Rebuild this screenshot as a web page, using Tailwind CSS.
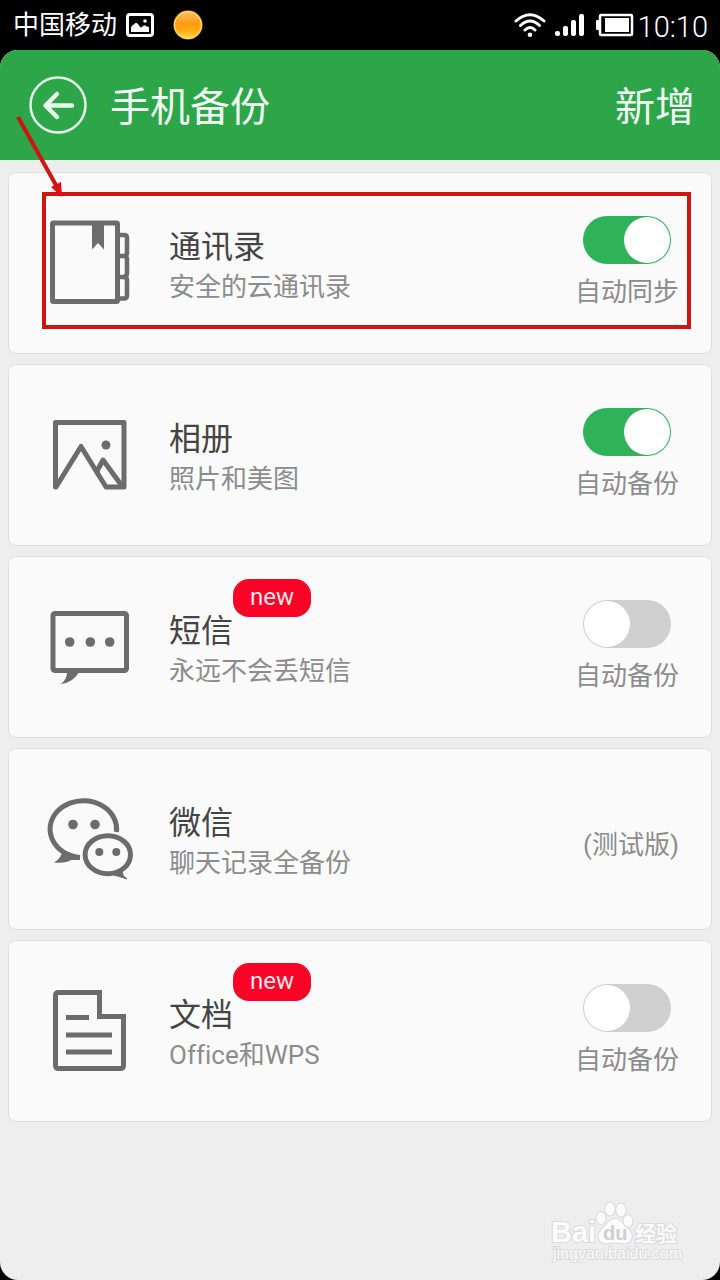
<!DOCTYPE html>
<html lang="zh-CN">

<head>
    <meta charset="UTF-8">
    <meta name="viewport" content="width=device-width, initial-scale=1.0">
    <script src="https://cdn.jsdelivr.net/npm/@tailwindcss/browser@4"></script>
    <title>手机备份</title>
</head>

<body class="bg-black font-['Roboto','Noto_Sans_CJK_SC',sans-serif] [font-variant-ligatures:none]">
    <div class="min-h-screen flex flex-col">

        <!-- status bar -->
        <div class="h-[50px] flex items-center justify-between pl-[13px] pr-3 text-white">
            <div class="flex items-center">
                <span class="text-[26px] leading-[50px]">中国移动</span>
                <svg class="w-7 h-6 ml-[9px]" viewBox="0 0 28 24" fill="none">
                    <rect x="1.5" y="1.5" width="25" height="21" rx="2.5" stroke="#fff" stroke-width="3" />
                    <path d="M5 19V14.500C6 12.500 7 11.500 8 11.500C9 9 12 9.500 13 12.500C14 14 15 15 16 14C17.500 12 20 12 21 14C22 13 23 14 23 15V19Z" fill="#fff" />
                    <circle cx="19" cy="8" r="1.800" fill="#fff" />
                </svg>
                <svg class="size-8 ml-[18px]" viewBox="0 0 32 32">
                    <defs>
                        <linearGradient id="sun" x1="0" y1="0" x2="0" y2="1">
                            <stop offset="0" stop-color="#ffc070" />
                            <stop offset=".45" stop-color="#ff9c10" />
                            <stop offset=".7" stop-color="#ffa814" />
                            <stop offset="1" stop-color="#ffdc50" />
                        </linearGradient>
                    </defs>
                    <circle cx="16" cy="16" r="15" fill="#8a7410" opacity=".5" />
                    <circle cx="16" cy="16" r="13.500" fill="url(#sun)" stroke="#ffd85a" stroke-width="1.500" />
                </svg>
            </div>
            <div class="flex items-center">
                <svg class="w-8 h-6" viewBox="0 0 32 24" fill="none" stroke="#fff" stroke-width="3" stroke-linecap="round">
                    <path d="M2 8Q16 -4.500 30 8M6.500 12.500Q16 3.500 25.500 12.500M11 17Q16 12 21 17" />
                    <circle cx="16" cy="21.700" r="2.300" fill="#fff" stroke="none" />
                </svg>
                <svg class="w-[30px] h-6 ml-2" viewBox="0 0 30 24" fill="#fff">
                    <rect x="1" y="18" width="5" height="5" rx="2" />
                    <rect x="9" y="13" width="5" height="10" rx="2" />
                    <rect x="17" y="7" width="5" height="16" rx="2" />
                    <rect x="25" y="1" width="5" height="22" rx="2" />
                </svg>
                <svg class="w-[38px] h-6 ml-3" viewBox="0 0 38 24" fill="none">
                    <rect x="4" y="2" width="32" height="20" rx="1" stroke="#fff" stroke-width="2.500" />
                    <rect x="0" y="7" width="4" height="10" rx="1" fill="#fff" />
                    <rect x="9" y="5" width="24" height="14" fill="#fff" />
                </svg>
                <time class="text-[29px] leading-[50px] font-light ml-1 pt-1">10:10</time>
            </div>
        </div>

        <div class="grow flex flex-col bg-[#eeeeee] rounded-[18px]">
            <header class="h-[111px] flex items-center bg-[#2ca649] border-b border-[#d5fadb] rounded-t-[18px] text-[#f2fff4] pl-7 pr-[25px]">
                <button type="button" aria-label="返回" class="size-[60px]">
                    <svg viewBox="0 0 60 60" fill="none" stroke="#e6fbe9">
                        <circle cx="30" cy="30" r="27.500" stroke-width="2.500" />
                        <path d="M44 30.500H18M29 19L17.500 30.500L29 42" stroke-width="4.500" stroke-linecap="round" stroke-linejoin="round" />
                    </svg>
                </button>
                <h1 class="text-[40px] leading-[60px] ml-[22px] pt-1.5">手机备份</h1>
                <button type="button" class="text-[40px] leading-[60px] ml-auto pt-1.5">新增</button>
            </header>

            <main class="px-2 pt-[11px]">
                <ul class="flex flex-col gap-[10px]">
                    <li class="relative flex items-center h-[182px] bg-[#fafafa] border border-[#dedede] rounded-lg pl-[33px] pr-8">
                        <svg class="size-24 shrink-0" viewBox="0 0 96 96" fill="none" stroke="#6c6c6c">
                            <rect x="10.500" y="8" width="65" height="78.500" rx="1" stroke-width="5" />
                            <path d="M50 8H62V34.500L56 28L50 34.500Z" fill="#6c6c6c" stroke="none" />
                            <path d="M77 20H82Q85 20 85 23V38Q85 41 81 41H77M81 41Q85 41 85 44V58Q85 62 81 62H77M81 62Q85 62 85 65V80Q85 83.500 82 83.500H77" stroke-width="4.500" />
                        </svg>
                        <div class="ml-[31px] pt-2">
                            <h2 class="w-fit text-[32px] leading-10 text-[#444444]">通讯录</h2>
                            <p class="text-[26px] leading-10 text-[#8c8c8c]">安全的云通讯录</p>
                        </div>
                        <label class="ml-auto flex flex-col items-center gap-[10px] text-[26px] leading-9 text-[#8c8c8c]">
                            <input type="checkbox" checked class="appearance-none w-[88px] h-12 rounded-full bg-[#cfcfcf] checked:bg-[#30b25b] p-px before:block before:size-[46px] before:rounded-full before:bg-white checked:before:ml-10">
                            自动同步
                        </label>
                        <!-- marker around the first entry -->
                        <div class="absolute left-[33px] right-5 top-[19px] bottom-6 border-4 border-[#d01414] pointer-events-none"></div>
                        <svg class="absolute left-0 -top-16 w-16 h-[90px] pointer-events-none" viewBox="0 0 64 90" fill="none">
                            <path d="M9 8L48 78" stroke="#d01414" stroke-width="4" />
                            <path d="M53 88L42 78L52 73Z" fill="#e80c0c" />
                        </svg>
                    </li>

                    <li class="flex items-center h-[182px] bg-[#fafafa] border border-[#dedede] rounded-lg pl-[33px] pr-8">
                        <svg class="size-24 shrink-0" viewBox="0 0 96 96" fill="none" stroke="#6c6c6c" stroke-width="5" stroke-linejoin="round">
                            <path d="M13.500 80V15.500H82V80H64L39 39.500L14 80Z" />
                            <path d="M55 64L61 53L80 79" />
                            <circle cx="64" cy="38" r="4.500" fill="#6c6c6c" stroke="none" />
                        </svg>
                        <div class="ml-[31px] pt-2">
                            <h2 class="w-fit text-[32px] leading-10 text-[#444444]">相册</h2>
                            <p class="text-[26px] leading-10 text-[#8c8c8c]">照片和美图</p>
                        </div>
                        <label class="ml-auto flex flex-col items-center gap-[10px] text-[26px] leading-9 text-[#8c8c8c]">
                            <input type="checkbox" checked class="appearance-none w-[88px] h-12 rounded-full bg-[#cfcfcf] checked:bg-[#30b25b] p-px before:block before:size-[46px] before:rounded-full before:bg-white checked:before:ml-10">
                            自动备份
                        </label>
                    </li>

                    <li class="flex items-center h-[182px] bg-[#fafafa] border border-[#dedede] rounded-lg pl-[33px] pr-8">
                        <svg class="size-24 shrink-0" viewBox="0 0 96 96" fill="none" stroke="#6c6c6c">
                            <rect x="11" y="14.500" width="73.500" height="57" rx="2" stroke-width="5" />
                            <path d="M25 73C25 78 23 82 19 85C27 84 33 80 37 73Z" fill="#6c6c6c" stroke="none" />
                            <g fill="#6c6c6c" stroke="none">
                                <circle cx="27.700" cy="43" r="4.800" />
                                <circle cx="48.300" cy="43" r="4.800" />
                                <circle cx="67.700" cy="43" r="4.800" />
                            </g>
                        </svg>
                        <div class="ml-[31px] pt-2">
                            <h2 class="relative w-fit text-[32px] leading-10 text-[#444444]">短信
                                <span class="absolute left-full -top-8 w-[78px] h-[38px] rounded-2xl bg-[#fb0326] text-center text-[24px] leading-[36px] text-[#ffe6ea]">new</span>
                            </h2>
                            <p class="text-[26px] leading-10 text-[#8c8c8c]">永远不会丢短信</p>
                        </div>
                        <label class="ml-auto flex flex-col items-center gap-[10px] text-[26px] leading-9 text-[#8c8c8c]">
                            <input type="checkbox" class="appearance-none w-[88px] h-12 rounded-full bg-[#cfcfcf] checked:bg-[#30b25b] p-px before:block before:size-[46px] before:rounded-full before:bg-white checked:before:ml-10">
                            自动备份
                        </label>
                    </li>

                    <li class="flex items-center h-[182px] bg-[#fafafa] border border-[#dedede] rounded-lg pl-[33px] pr-8">
                        <svg class="size-24 shrink-0" viewBox="0 0 96 96" fill="none" stroke="#6c6c6c" stroke-width="5">
                            <path d="M38 66.500Q29 66 21.500 61A33.300 28.500 0 1 1 74.500 41" />
                            <path d="M20 59Q20 67 12 71.500Q24 72.500 29 69L38 69V65Z" fill="#6c6c6c" stroke="none" />
                            <ellipse cx="65.800" cy="63.700" rx="22.700" ry="19" />
                            <path d="M72 84Q76 85 85 88Q80 85 80 80Z" fill="#6c6c6c" stroke-width="1" />
                            <g fill="#6c6c6c" stroke="none">
                                <circle cx="31" cy="33.500" r="4.800" />
                                <circle cx="53" cy="33.500" r="4.800" />
                                <circle cx="57.300" cy="61" r="4" />
                                <circle cx="74.300" cy="61" r="4" />
                            </g>
                        </svg>
                        <div class="ml-[31px] pt-2">
                            <h2 class="w-fit text-[32px] leading-10 text-[#444444]">微信</h2>
                            <p class="text-[26px] leading-10 text-[#8c8c8c]">聊天记录全备份</p>
                        </div>
                        <span class="ml-auto pt-3 text-[26px] leading-9 text-[#8c8c8c]">(测试版)</span>
                    </li>

                    <li class="flex items-center h-[182px] bg-[#fafafa] border border-[#dedede] rounded-lg pl-[33px] pr-8">
                        <svg class="size-24 shrink-0" viewBox="0 0 96 96" fill="none" stroke="#6c6c6c" stroke-width="5">
                            <path d="M57.500 7V33.500H84M81.500 33V82Q81.500 85.500 78.500 85.500H16.500Q13.500 85.500 13.500 82V12.500Q13.500 9.500 16.500 9.500H58" />
                            <path d="M24 34.500H47M24 52H70M24 69H70" />
                        </svg>
                        <div class="ml-[31px] pt-2">
                            <h2 class="relative w-fit text-[32px] leading-10 text-[#444444]">文档
                                <span class="absolute left-full -top-8 w-[78px] h-[38px] rounded-2xl bg-[#fb0326] text-center text-[24px] leading-[36px] text-[#ffe6ea]">new</span>
                            </h2>
                            <p class="text-[26px] leading-10 text-[#8c8c8c]">Office和WPS</p>
                        </div>
                        <label class="ml-auto flex flex-col items-center gap-[10px] text-[26px] leading-9 text-[#8c8c8c]">
                            <input type="checkbox" class="appearance-none w-[88px] h-12 rounded-full bg-[#cfcfcf] checked:bg-[#30b25b] p-px before:block before:size-[46px] before:rounded-full before:bg-white checked:before:ml-10">
                            自动备份
                        </label>
                    </li>
                </ul>
            </main>

            <footer class="mt-auto self-end pr-9 pb-3">
                <svg class="w-[136px] h-[70px] font-['Liberation_Sans','Noto_Sans_CJK_SC',sans-serif]" viewBox="0 0 136 70" fill="#fbfbfb" stroke="#dadada" stroke-width="2" paint-order="stroke">
                    <text x="3" y="44" font-size="29" font-weight="700">Bai</text>
                    <ellipse cx="53" cy="20" rx="4.500" ry="6" />
                    <ellipse cx="62" cy="11" rx="4.800" ry="6.500" />
                    <ellipse cx="73" cy="12" rx="4.800" ry="6.500" />
                    <ellipse cx="80" cy="23" rx="4.500" ry="6" />
                    <path d="M67 21C73 21 75 27 80 31C87 37 84 46 75 45.500Q67 43.500 59 45.500C50 46 48 37 54 31C59 27 61 21 67 21Z" />
                    <text x="55" y="42" font-size="20" font-weight="700" fill="#d0d0d0" stroke="none">du</text>
                    <text x="87" y="43" font-size="21" font-weight="700">经验</text>
                    <text x="5" y="61" font-size="16">jingyan.baidu.com</text>
                </svg>
            </footer>
        </div>
    </div>
</body>

</html>
